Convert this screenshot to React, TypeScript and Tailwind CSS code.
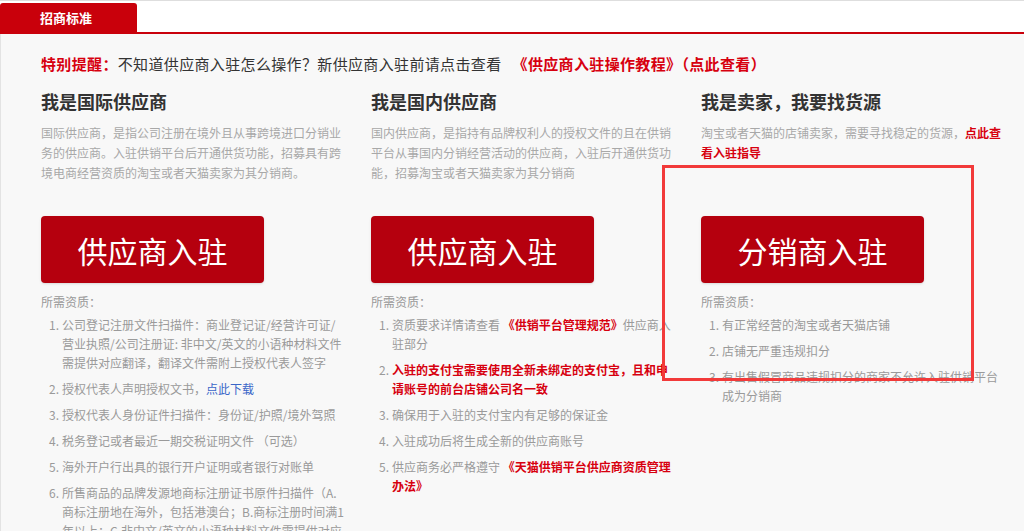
import type { ReactNode } from "react";

const RED = "text-[#d7000f]";

type Item = { lines: ReactNode[] };

type Column = {
  title: string;
  desc: ReactNode[];
  button: string;
  items: Item[];
};

const columns: Column[] = [
  {
    title: "我是国际供应商",
    desc: [
      "国际供应商，是指公司注册在境外且从事跨境进口分销业",
      "务的供应商。入驻供销平台后开通供货功能，招募具有跨",
      "境电商经营资质的淘宝或者天猫卖家为其分销商。",
    ],
    button: "供应商入驻",
    items: [
      {
        lines: [
          "公司登记注册文件扫描件：商业登记证/经营许可证/",
          "营业执照/公司注册证: 非中文/英文的小语种材料文件",
          "需提供对应翻译，翻译文件需附上授权代表人签字",
        ],
      },
      {
        lines: [
          <>
            授权代表人声明授权文书，<span className="text-[#3a66c8]">点此下载</span>
          </>,
        ],
      },
      { lines: ["授权代表人身份证件扫描件：身份证/护照/境外驾照"] },
      { lines: ["税务登记或者最近一期交税证明文件 （可选）"] },
      { lines: ["海外开户行出具的银行开户证明或者银行对账单"] },
      {
        lines: [
          "所售商品的品牌发源地商标注册证书原件扫描件（A.",
          "商标注册地在海外，包括港澳台；B.商标注册时间满1",
          "年以上；C.非中文/英文的小语种材料文件需提供对应",
        ],
      },
    ],
  },
  {
    title: "我是国内供应商",
    desc: [
      "国内供应商，是指持有品牌权利人的授权文件的且在供销",
      "平台从事国内分销经营活动的供应商，入驻后开通供货功",
      "能，招募淘宝或者天猫卖家为其分销商",
    ],
    button: "供应商入驻",
    items: [
      {
        lines: [
          <>
            资质要求详情请查看 <span className={`${RED} font-bold`}>《供销平台管理规范》</span>供应商入
          </>,
          "驻部分",
        ],
      },
      {
        lines: [
          <span className={`${RED} font-bold`}>入驻的支付宝需要使用全新未绑定的支付宝，且和申</span>,
          <span className={`${RED} font-bold`}>请账号的前台店铺公司名一致</span>,
        ],
      },
      { lines: ["确保用于入驻的支付宝内有足够的保证金"] },
      { lines: ["入驻成功后将生成全新的供应商账号"] },
      {
        lines: [
          <>
            供应商务必严格遵守 <span className={`${RED} font-bold`}>《天猫供销平台供应商资质管理</span>
          </>,
          <span className={`${RED} font-bold`}>办法》</span>,
        ],
      },
    ],
  },
  {
    title: "我是卖家，我要找货源",
    desc: [
      <>
        淘宝或者天猫的店铺卖家，需要寻找稳定的货源，<span className={`${RED} font-bold`}>点此查</span>
      </>,
      <span className={`${RED} font-bold`}>看入驻指导</span>,
    ],
    button: "分销商入驻",
    items: [
      { lines: ["有正常经营的淘宝或者天猫店铺"] },
      { lines: ["店铺无严重违规扣分"] },
      {
        lines: ["有出售假冒商品违规扣分的商家不允许入驻供销平台", "成为分销商"],
      },
    ],
  },
];

export default function App() {
  return (
    <div
      className="relative w-[1024px] h-[531px] overflow-hidden bg-white"
      style={{ fontFamily: '"Noto Sans CJK SC", "Noto Sans", sans-serif' }}
    >
      {/* header tab */}
      <div className="border-t border-[#dedede] pt-[2px]">
        <div className="flex">
          <div className="w-[137px] h-[29px] bg-[#c9000b] rounded-t-[3px] flex items-center pl-[40px] text-[13px] font-bold text-white">
            招商标准
          </div>
        </div>
        <div className="h-[2px] bg-[#c9000b]" />
      </div>

      <div className="h-full bg-[#f8f8f8] border-l border-[#e3e3e3] pt-[20px] pl-[40px]">
        {/* notice */}
        <p className="text-[15px] leading-[20px] tracking-[0.35px] whitespace-nowrap text-[#333]">
          <span className={`${RED} font-bold`}>特别提醒：</span>
          不知道供应商入驻怎么操作？新供应商入驻前请点击查看
          <span className={`${RED} font-bold ml-[11px]`}>《供应商入驻操作教程》（点此查看）</span>
        </p>

        <div className="grid grid-cols-[300px_300px_300px] gap-x-[30px] mt-[15px]">
          {columns.map((col, ci) => (
            <div key={ci} className="flex flex-col">
              <h2 className="text-[18px] leading-[24px] font-bold text-[#333]">{col.title}</h2>
              <div className="mt-[10px] min-h-[60px] text-[12px] leading-[20px] text-[#a8a8a8] whitespace-nowrap">
                {col.desc.map((l, i) => (
                  <div key={i}>{l}</div>
                ))}
              </div>
              <button className="mt-[33px] w-[223px] h-[67px] rounded-[4px] bg-[#b5000e] text-white text-[30px] leading-none shadow-sm">
                {col.button}
              </button>
              <div className="mt-[9px] text-[12px] leading-[20px] text-[#999]">所需资质：</div>
              <ol className="mt-[3px] pl-[8px] flex flex-col gap-[7px] text-[12px] leading-[19px] text-[#9a9a9a] whitespace-nowrap">
                {col.items.map((it, ii) => (
                  <li key={ii} className="flex">
                    <span className="w-[13px] shrink-0">{ii + 1}.</span>
                    <div>
                      {it.lines.map((l, li) => (
                        <div key={li}>{l}</div>
                      ))}
                    </div>
                  </li>
                ))}
              </ol>
            </div>
          ))}
        </div>
      </div>

      {/* annotation box */}
      <div className="absolute left-[662px] top-[165px] w-[312px] h-[216px] border-[3px] border-[#f23a3a] pointer-events-none" />
    </div>
  );
}
